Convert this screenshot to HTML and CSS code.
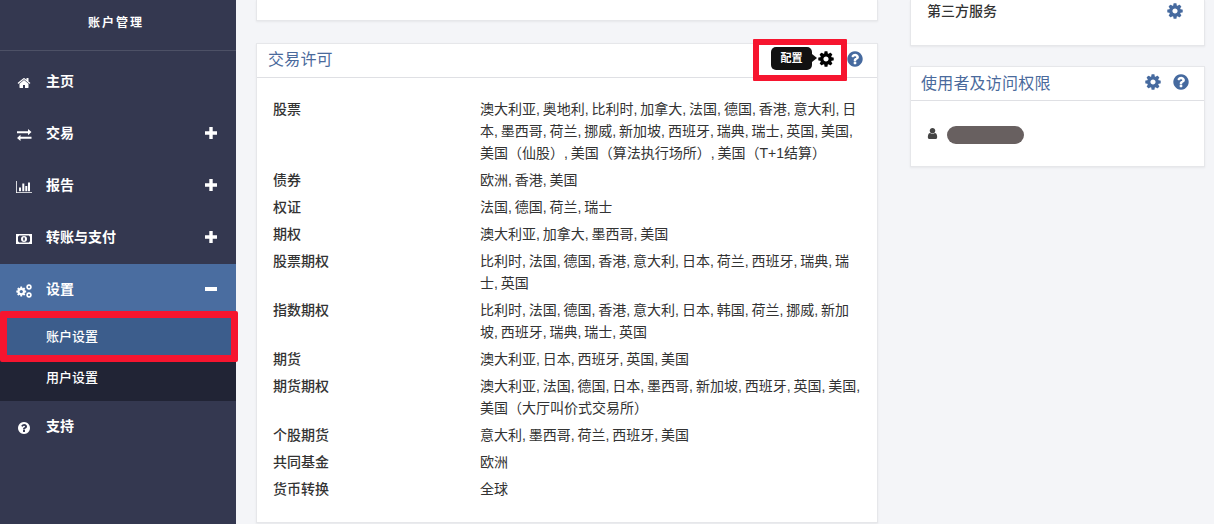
FILE: index.html
```html
<!DOCTYPE html>
<html lang="zh-CN">
  <head>
    <meta charset="UTF-8" />
    <title>账户管理</title>
    <link rel="stylesheet" href="styles.css">
  </head>
  <body>
    <!-- Icon set -->
    <svg class="icon-defs" xmlns="http://www.w3.org/2000/svg">
      <symbol id="i-cog" viewBox="0 0 1792 1792"><path d="M1152 896q0-106-75-181t-181-75-181 75-75 181 75 181 181 75 181-75 75-181zm512-109v222q0 12-8 23t-20 13l-185 28q-19 54-39 91 35 50 107 138 10 12 10 25t-9 23q-27 37-99 108t-94 71q-12 0-26-9l-138-108q-44 23-91 38-16 136-29 186-7 28-36 28h-222q-14 0-24.500-8.500t-11.500-21.500l-28-184q-49-16-90-37l-141 107q-10 9-25 9-14 0-25-11-126-114-165-168-7-10-7-23 0-12 8-23 15-21 51-66.500t54-70.500q-27-50-41-99l-183-27q-13-2-21-12.500t-8-23.500v-222q0-12 8-23t19-13l186-28q14-46 39-92-40-57-107-138-10-12-10-24 0-10 9-23 26-36 98.500-107.500t94.500-71.500q13 0 26 10l138 107q44-23 91-38 16-136 29-186 7-28 36-28h222q14 0 24.500 8.500t11.500 21.500l28 184q49 16 90 37l142-107q9-9 24-9 13 0 25 10 129 119 165 170 7 8 7 22 0 12-8 23-15 21-51 66.500t-54 70.500q26 50 41 98l183 28q13 2 21 12.500t8 23.500z"/></symbol>
      <symbol id="i-help" viewBox="0 0 1792 1792"><path d="M1024 1376v-192q0-14-9-23t-23-9h-192q-14 0-23 9t-9 23v192q0 14 9 23t23 9h192q14 0 23-9t9-23zm256-672q0-88-55.500-163t-138.500-116-170-41q-243 0-371 213-15 24 8 42l132 100q7 6 19 6 16 0 25-12 53-68 86-92 34-24 86-24 48 0 85.500 26t37.500 59q0 38-20 61t-68 45q-63 28-115.500 86.500t-52.500 125.500v36q0 14 9 23t23 9h192q14 0 23-9t9-23q0-19 21.500-49.500t54.500-49.500q32-18 49-28.500t46-35 44.500-48 28-60.500 12.500-81zm384 192q0 209-103 385.500t-279.500 279.500-385.500 103-385.500-103-279.500-279.500-103-385.500 103-385.500 279.500-279.500 385.500-103 385.500 103 279.500 279.500 103 385.500z"/></symbol>
      <symbol id="i-home" viewBox="0 0 1792 1792"><path d="M1472 992v480q0 26-19 45t-45 19h-384v-384h-256v384h-384q-26 0-45-19t-19-45v-480q0-1 .5-3t.5-3l575-474 575 474q1 2 1 6zm223-69l-62 74q-8 9-21 11h-3q-13 0-21-7l-692-577-692 577q-12 8-24 7-13-2-21-11l-62-74q-8-10-7-23.500t11-21.500l719-599q32-26 76-26t76 26l244 204v-195q0-14 9-23t23-9h192q14 0 23 9t9 23v408l219 182q10 8 11 21.500t-7 23.500z"/></symbol>
      <symbol id="i-user" viewBox="0 0 1792 1792"><path d="M1536 1399q0 109-62.500 187t-150.500 78h-854q-88 0-150.500-78t-62.500-187q0-85 8.500-160.500t31.500-152 58.500-131 94-89 134.500-34.500q131 128 313 128t313-128q76 0 134.500 34.500t94 89 58.500 131 31.500 152 8.500 160.500zm-256-887q0 159-112.500 271.500t-271.500 112.500-271.500-112.500-112.500-271.500 112.500-271.500 271.500-112.500 271.500 112.500 112.500 271.500z"/></symbol>
      <symbol id="i-plus" viewBox="0 0 12 12"><path d="M4.300 0h3.400v4.300H12v3.400H7.700V12H4.300V7.700H0V4.300h4.300z"/></symbol>
      <symbol id="i-exchange" viewBox="0 0 16 12"><path d="M1 2.300h11V0l3.500 3.100L12 6.200V4.200H1zM15.500 7.700v2h-11V12L1 8.900l3.500-3.100v1.900z"/></symbol>
      <symbol id="i-chart" viewBox="0 0 16 12"><path d="M0 0h.8v11.200H16V12H0zM3 6.500h2v3.700H3zM6.300 2.500h2v7.700h-2zM9.300 5h2v5.200h-2zM12 1.500h2v8.700h-2z"/></symbol>
      <symbol id="i-money" viewBox="0 0 16 10"><path fill-rule="evenodd" d="M0 0h16v10H0zM2 2.500v5a1 1 0 0 1 1 1h10a1 1 0 0 1 1-1v-5a1 1 0 0 1-1-1H3a1 1 0 0 1-1 1zM8 2a3 3 0 1 1 0 6 3 3 0 0 1 0-6zM7.200 3.500v3h1.600v-3z"/></symbol>
    </svg>

    <!-- Sidebar -->
    <aside class="sidebar">
      <div class="sidebar-title">账户管理</div>
      <nav class="menu">
        <a class="menu-item" href="#">
          <svg class="menu-icon"><use href="#i-home"/></svg>
          <span>主页</span>
        </a>
        <a class="menu-item" href="#">
          <svg class="menu-icon"><use href="#i-exchange"/></svg>
          <span>交易</span>
          <svg class="menu-toggle"><use href="#i-plus"/></svg>
        </a>
        <a class="menu-item" href="#">
          <svg class="menu-icon"><use href="#i-chart"/></svg>
          <span>报告</span>
          <svg class="menu-toggle"><use href="#i-plus"/></svg>
        </a>
        <a class="menu-item" href="#">
          <svg class="menu-icon"><use href="#i-money"/></svg>
          <span>转账与支付</span>
          <svg class="menu-toggle"><use href="#i-plus"/></svg>
        </a>
        <a class="menu-item active" href="#">
          <svg class="menu-icon" viewBox="0 0 16 14">
            <use href="#i-cog" x="-0.500" y="1.800" width="11.500" height="11.500"/>
            <use href="#i-cog" x="9.500" y="-0.500" width="7" height="7"/>
            <use href="#i-cog" x="9.500" y="7.500" width="7" height="7"/>
          </svg>
          <span>设置</span>
          <span class="menu-minus"></span>
        </a>
        <div class="submenu">
          <a class="submenu-item current" href="#">账户设置</a>
          <a class="submenu-item" href="#">用户设置</a>
        </div>
        <a class="menu-item" href="#">
          <svg class="menu-icon"><use href="#i-help"/></svg>
          <span>支持</span>
        </a>
      </nav>
    </aside>

    <!-- Main column -->
    <main class="content">
      <section class="panel panel-cut"></section>

      <section class="panel panel-trade">
        <header class="panel-head">
          <h2>交易许可</h2>
          <div class="panel-actions">
            <span class="tip">配置</span>
            <svg class="action-icon action-dark"><use href="#i-cog"/></svg>
            <svg class="action-icon"><use href="#i-help"/></svg>
          </div>
          <div class="callout"></div>
        </header>
        <dl class="perm-list">
          <div class="perm-row">
            <dt>股票</dt>
            <dd>澳大利亚, 奥地利, 比利时, 加拿大, 法国, 德国, 香港, 意大利, 日本, 墨西哥, 荷兰, 挪威, 新加坡, 西班牙, 瑞典, 瑞士, 英国, 美国, 美国（仙股）, 美国（算法执行场所）, 美国（T+1结算）</dd>
          </div>
          <div class="perm-row"><dt>债券</dt><dd>欧洲, 香港, 美国</dd></div>
          <div class="perm-row"><dt>权证</dt><dd>法国, 德国, 荷兰, 瑞士</dd></div>
          <div class="perm-row"><dt>期权</dt><dd>澳大利亚, 加拿大, 墨西哥, 美国</dd></div>
          <div class="perm-row">
            <dt>股票期权</dt>
            <dd>比利时, 法国, 德国, 香港, 意大利, 日本, 荷兰, 西班牙, 瑞典, 瑞士, 英国</dd>
          </div>
          <div class="perm-row">
            <dt>指数期权</dt>
            <dd>比利时, 法国, 德国, 香港, 意大利, 日本, 韩国, 荷兰, 挪威, 新加坡, 西班牙, 瑞典, 瑞士, 英国</dd>
          </div>
          <div class="perm-row"><dt>期货</dt><dd>澳大利亚, 日本, 西班牙, 英国, 美国</dd></div>
          <div class="perm-row">
            <dt>期货期权</dt>
            <dd>澳大利亚, 法国, 德国, 日本, 墨西哥, 新加坡, 西班牙, 英国, 美国, 美国（大厅叫价式交易所）</dd>
          </div>
          <div class="perm-row"><dt>个股期货</dt><dd>意大利, 墨西哥, 荷兰, 西班牙, 美国</dd></div>
          <div class="perm-row"><dt>共同基金</dt><dd>欧洲</dd></div>
          <div class="perm-row"><dt>货币转换</dt><dd>全球</dd></div>
        </dl>
      </section>
    </main>

    <!-- Right column -->
    <div class="side-col">
      <section class="panel panel-services">
        <span class="service-name">第三方服务</span>
        <svg class="action-icon"><use href="#i-cog"/></svg>
      </section>

      <section class="panel panel-access">
        <header class="panel-head">
          <h2>使用者及访问权限</h2>
          <div class="panel-actions">
            <svg class="action-icon"><use href="#i-cog"/></svg>
            <svg class="action-icon"><use href="#i-help"/></svg>
          </div>
        </header>
        <div class="user-row">
          <svg class="user-icon"><use href="#i-user"/></svg>
          <span class="user-mask"></span>
        </div>
      </section>
    </div>
  </body>
</html>
```

FILE: styles.css
```css
* {
  box-sizing: border-box;
}

body {
  margin: 0;
  display: flex;
  height: 524px;
  overflow: hidden;
  font-family: "Liberation Sans", "Noto Sans CJK SC", sans-serif;
  font-size: 14px;
  color: #333;
  background-color: #f4f5f8;
}

.icon-defs {
  display: none;
}

/* Sidebar */
.sidebar {
  flex: 0 0 236px;
  background-color: #343850;
  color: #fff;
}

.sidebar-title {
  height: 51px;
  padding: 15px 4px 0 0;
  border-bottom: 1px solid #4d5166;
  font-size: 12px;
  font-weight: 700;
  line-height: 16px;
  letter-spacing: 2px;
  text-align: center;
}

.menu {
  display: flex;
  flex-direction: column;
  padding-top: 5px;
}

.menu-item {
  display: flex;
  align-items: center;
  height: 52px;
  padding: 0 19px 0 16px;
  color: #fff;
  font-weight: 700;
  text-decoration: none;
}

.menu-item span:first-of-type {
  flex-grow: 1;
  margin-top: -4px;
}

.menu-item.active {
  background-color: #4a6da0;
}

.menu-icon {
  flex: 0 0 16px;
  width: 16px;
  height: 14px;
  margin: 2px 14px 0 0;
  fill: #fff;
}

.menu-toggle {
  width: 12px;
  height: 12px;
  margin-top: -2px;
  fill: #fff;
}

.menu-minus {
  width: 12px;
  height: 4px;
  margin-top: -2px;
  background-color: #fff;
}

.submenu {
  display: flex;
  flex-direction: column;
  background-color: #212435;
}

.submenu-item {
  height: 44px;
  padding-left: 46px;
  color: #fff;
  font-size: 13px;
  font-weight: 500;
  line-height: 42px;
  text-decoration: none;
}

.submenu-item.current {
  position: relative;
  height: 41px;
  background-color: #3c5d8c;
}

/* Red highlight drawn over the current item */
.submenu-item.current::after {
  content: "";
  position: absolute;
  top: -5px;
  left: 0;
  right: -2px;
  bottom: -5px;
  border: 7px solid #f6152f;
  border-radius: 2px;
}

/* Main column */
.content {
  flex: 0 0 642px;
  padding-left: 20px;
}

.panel {
  background-color: #fff;
  border: 1px solid #e6e7ea;
  box-shadow: 0 1px 2px rgba(0, 0, 0, 0.06);
}

.panel-cut {
  height: 21px;
  margin-bottom: 22px;
  border-top: none;
}

.panel-trade {
  height: 480px;
}

.panel-head {
  position: relative;
  display: flex;
  justify-content: space-between;
  align-items: center;
  height: 34px;
  padding: 0 13px 4px 11px;
  border-bottom: 1px solid #dfe0e4;
}

.panel-head h2 {
  margin: 0 0 2px;
  font-size: 16px;
  font-weight: 400;
  letter-spacing: 0.200px;
  color: #4a6a9c;
}

.panel-actions {
  display: flex;
  align-items: center;
  gap: 11px;
}

.action-icon {
  width: 18px;
  height: 18px;
  fill: #466a9f;
}

.action-dark {
  fill: #000;
}

.tip {
  position: relative;
  width: 41px;
  height: 23px;
  margin-right: -6px;
  border-radius: 5px;
  background-color: #111;
  color: #fff;
  font-size: 11px;
  font-weight: 700;
  line-height: 23px;
  text-align: center;
}

.tip::after {
  content: "";
  position: absolute;
  top: 7px;
  left: 41px;
  border-style: solid;
  border-width: 4px 0 4px 5px;
  border-color: transparent transparent transparent #111;
}

/* Red highlight drawn over the actions */
.callout {
  position: absolute;
  top: -5px;
  right: 30px;
  width: 94px;
  height: 42px;
  border: 6px solid #f6152f;
  border-radius: 1px;
}

.perm-list {
  margin: 0;
  padding: 20px 15px 0 16px;
}

.perm-row {
  display: flex;
  padding-bottom: 5px;
  line-height: 22px;
}

.perm-row dt {
  flex: 0 0 207px;
  font-weight: 500;
}

.perm-row dd {
  flex: 1;
  margin: 0;
  word-spacing: -1px;
}

/* Right column */
.side-col {
  flex: 0 0 295px;
  margin-left: 32px;
}

.panel-services {
  display: flex;
  justify-content: space-between;
  height: 46px;
  padding: 2px 20px 0 16px;
  border-top: none;
  margin-bottom: 20px;
}

.service-name {
  margin-top: 1px;
  font-weight: 500;
  line-height: 16px;
}

.panel-access {
  height: 101px;
}

.panel-access .panel-head {
  padding: 0 14px 3px 10px;
}

.panel-access .panel-head h2 {
  margin-bottom: 1px;
}

.panel-access .panel-actions {
  gap: 10px;
}

.user-row {
  display: flex;
  align-items: center;
  gap: 8px;
  padding: 25px 0 0 15px;
}

.user-icon {
  width: 13px;
  height: 13px;
  margin-top: -4px;
  fill: #444;
}

.user-mask {
  width: 77px;
  height: 18px;
  border-radius: 9px;
  background-color: #686060;
}
```
